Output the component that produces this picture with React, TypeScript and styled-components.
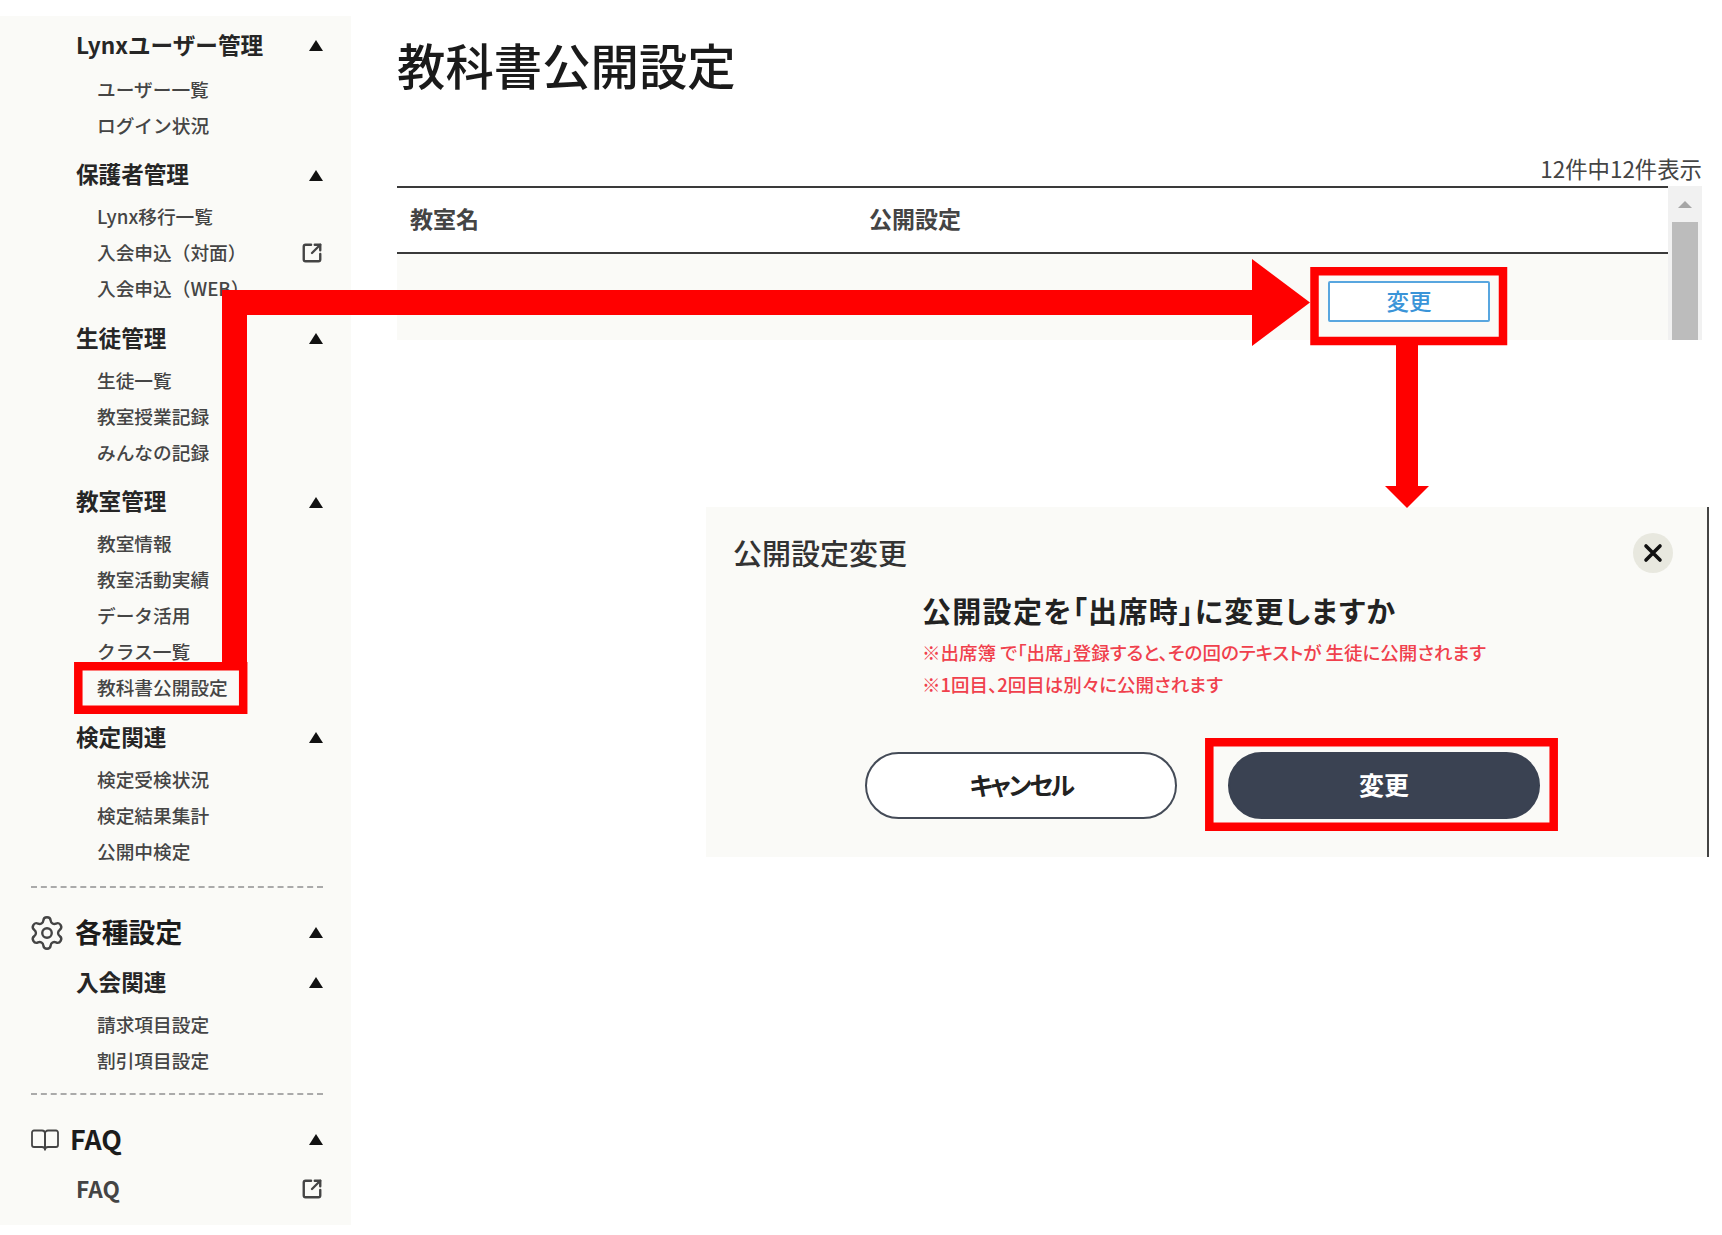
import React from "react";
import styled, { createGlobalStyle } from "styled-components";
import { Settings, SquareArrowOutUpRight } from "lucide-react";

const Global = createGlobalStyle`
  html, body { margin: 0; padding: 0; background: #fff; }
  body { font-family: "Noto Sans CJK JP", "Noto Sans", sans-serif; color: #333; }
`;

const Page = styled.div`
  position: relative;
  display: flex;
  align-items: flex-start;
  width: 1722px;
  height: 1235px;
  overflow: hidden;
`;

const Sidebar = styled.nav`
  box-sizing: border-box;
  flex: 0 0 351px;
  height: 1209px;
  margin-top: 16px;
  padding: 12px 28px 0 31px;
  background: #fafaf7;
`;

const Group = styled.section<{ $gap?: number }>`
  margin-bottom: ${(p) => p.$gap ?? 13.5}px;
`;

const GroupHead = styled.div<{ $mb?: number }>`
  box-sizing: border-box;
  display: flex;
  align-items: center;
  height: 36px;
  margin-bottom: ${(p) => p.$mb ?? 6}px;
  padding: 0 0 4px 45px;
  font-size: 22.6px;
  font-weight: 700;
  color: #262626;
`;

const SectionHead = styled.div<{ $mb?: number }>`
  box-sizing: border-box;
  display: flex;
  align-items: center;
  height: 36px;
  margin-bottom: ${(p) => p.$mb ?? 14}px;
  padding-bottom: 4px;
  font-size: 26.8px;
  font-weight: 700;
  color: #1c1c1c;
`;

const SectionIcon = styled.span<{ $w: number; $shift?: number }>`
  display: flex;
  flex: 0 0 ${(p) => p.$w}px;
  margin-top: 3px;
  color: #444;
  & > svg {
    margin-left: ${(p) => p.$shift ?? 0}px;
  }
`;

const Caret = styled.span`
  width: 0;
  height: 0;
  margin: 3px 0 0 auto;
  border-left: 7px solid transparent;
  border-right: 7px solid transparent;
  border-bottom: 11px solid #111;
`;

const Item = styled.div`
  box-sizing: border-box;
  display: flex;
  align-items: center;
  height: 36px;
  padding: 0 0 4px 66px;
  font-size: 18.7px;
  font-weight: 500;
  color: #454545;
  white-space: nowrap;
`;

const LinkRow = styled(GroupHead)`
  margin: 0;
  color: #444;
  font-weight: 600;
`;

const LinkIcon = styled.span`
  display: flex;
  margin: 2px 0 0 auto;
  color: #444;
`;

const Dashed = styled.hr<{ $mt: number; $mb: number }>`
  margin: ${(p) => p.$mt}px 0 ${(p) => p.$mb}px;
  border: 0;
  border-top: 2px dashed #aaa;
`;

const Main = styled.main`
  box-sizing: border-box;
  flex: 1;
  min-width: 0;
  padding: 34px 13px 0 46px;
`;

const Title = styled.h1`
  margin: 0;
  font-size: 48.4px;
  line-height: 60px;
  font-weight: 500;
  color: #1a1a1a;
`;

const Count = styled.div`
  margin: 60px 7px 0 0;
  height: 28px;
  line-height: 28px;
  text-align: right;
  font-size: 22.4px;
  color: #444;
`;

const TableWrap = styled.div`
  display: flex;
  margin: 4px 7px 0 0;
  height: 154px;
`;

const Table = styled.div`
  flex: 1;
  min-width: 0;
`;

const TableHead = styled.div`
  display: flex;
  align-items: center;
  box-sizing: border-box;
  height: 68px;
  padding: 0 0 4px 13px;
  border-top: 2px solid #3a3a3a;
  border-bottom: 2px solid #3a3a3a;
  font-size: 23px;
  font-weight: 700;
  color: #444;
`;

const NameCol = styled.span`
  flex: 0 0 459px;
`;

const TableRow = styled.div`
  display: flex;
  justify-content: flex-end;
  box-sizing: border-box;
  height: 86px;
  padding: 27px 178px 0 0;
  background: #fafaf7;
`;

const OutlineButton = styled.button`
  box-sizing: border-box;
  width: 162px;
  height: 41px;
  padding: 0 0 4px;
  border: 2.5px solid #58a6df;
  border-radius: 2px;
  background: #fff;
  font-family: inherit;
  font-size: 22.5px;
  font-weight: 500;
  color: #3a94d8;
`;

const Scrollbar = styled.div`
  display: flex;
  flex-direction: column;
  flex: 0 0 34px;
  background: #f1f1f1;
`;

const ScrollUp = styled.div`
  display: flex;
  align-items: center;
  justify-content: center;
  height: 36px;
  &::before {
    content: "";
    border-left: 7px solid transparent;
    border-right: 7px solid transparent;
    border-bottom: 7px solid #a6a6a6;
  }
`;

const ScrollThumb = styled.div`
  flex: 1;
  margin: 0 4px;
  background: #bcbcbc;
`;

const Dialog = styled.section`
  box-sizing: border-box;
  width: 1003px;
  height: 350px;
  margin: 167px 0 0 309px;
  padding: 26px 34px 0 27px;
  border-right: 2px solid #444;
  background: #fafaf7;
`;

const DialogHead = styled.header`
  display: flex;
  align-items: center;
  justify-content: space-between;
  height: 40px;
`;

const DialogTitle = styled.h2`
  margin: 0 0 2px;
  font-size: 29px;
  font-weight: 500;
  color: #333;
`;

const CloseButton = styled.button`
  display: flex;
  align-items: center;
  justify-content: center;
  width: 40px;
  height: 40px;
  padding: 0;
  border: 0;
  border-radius: 50%;
  background: #e8e8df;
  color: #111;
`;

const DialogBody = styled.div`
  margin: 17px 0 0 189px;
`;

const Question = styled.p`
  margin: 0 0 6px;
  height: 40px;
  line-height: 40px;
  font-size: 29px;
  font-weight: 700;
  font-feature-settings: "palt";
  letter-spacing: 1.3px;
  color: #222;
  white-space: nowrap;
`;

const Note = styled.p`
  margin: 0;
  height: 32px;
  line-height: 32px;
  font-size: 18.5px;
  font-weight: 500;
  font-feature-settings: "palt";
  color: #f0404c;
  white-space: nowrap;
`;

const Actions = styled.div`
  display: flex;
  gap: 51px;
  margin: 52px 0 0 132px;
`;

const PillButton = styled.button<{ $solid?: boolean }>`
  box-sizing: border-box;
  width: 312px;
  height: 67px;
  padding: 0 0 4px;
  border: 2px solid ${(p) => (p.$solid ? "#3a4252" : "#444b57")};
  border-radius: 34px;
  background: ${(p) => (p.$solid ? "#3a4252" : "#fff")};
  color: ${(p) => (p.$solid ? "#fff" : "#222")};
  font-family: inherit;
  font-size: 25px;
  font-weight: 700;
  font-feature-settings: "palt";
  letter-spacing: ${(p) => (p.$solid ? 0 : -2.4)}px;
`;

const Annotation = styled.svg`
  position: absolute;
  inset: 0;
  pointer-events: none;
`;

const BookIcon = () => (
  <svg width="28" height="22" viewBox="0 0 28 22" fill="none" stroke="currentColor" strokeWidth="1.8" strokeLinejoin="round">
    <path d="M3 1.500h8c1.700 0 3 1.300 3 3v16c0-1.300-1.300-2.500-3-2.500H3c-1.100 0-2-.9-2-2v-12.500c0-1.100.9-2 2-2Z" />
    <path d="M25 1.500h-8c-1.700 0-3 1.300-3 3v16c0-1.300 1.300-2.500 3-2.500h8c1.100 0 2-.9 2-2v-12.500c0-1.100-.9-2-2-2Z" />
  </svg>
);

const groups = [
  { title: "Lynxユーザー管理", items: ["ユーザー一覧", "ログイン状況"], mb: 8 },
  { title: "保護者管理", items: ["Lynx移行一覧", "入会申込（対面）", "入会申込（WEB）"], external: 1 },
  { title: "生徒管理", items: ["生徒一覧", "教室授業記録", "みんなの記録"] },
  { title: "教室管理", items: ["教室情報", "教室活動実績", "データ活用", "クラス一覧", "教科書公開設定"] },
  { title: "検定関連", items: ["検定受検状況", "検定結果集計", "公開中検定"], last: true },
];

export default function App() {
  return (
    <>
      <Global />
      <Page>
        <Sidebar>
          {groups.map((g) => (
            <Group key={g.title} $gap={g.last ? 0 : undefined}>
              <GroupHead $mb={g.mb}>
                {g.title}
                <Caret />
              </GroupHead>
              {g.items.map((label, i) => (
                <Item key={label}>
                  {label}
                  {g.external === i && (
                    <LinkIcon>
                      <SquareArrowOutUpRight size={22} strokeWidth={2.6} />
                    </LinkIcon>
                  )}
                </Item>
              ))}
            </Group>
          ))}
          <Dashed $mt={16} $mb={27} />
          <SectionHead>
            <SectionIcon $w={44} $shift={-3}>
              <Settings size={38} strokeWidth={1.5} />
            </SectionIcon>
            各種設定
            <Caret />
          </SectionHead>
          <Group $gap={0}>
            <GroupHead>
              入会関連
              <Caret />
            </GroupHead>
            <Item>請求項目設定</Item>
            <Item>割引項目設定</Item>
          </Group>
          <Dashed $mt={14} $mb={27} />
          <SectionHead>
            <SectionIcon $w={39}>
              <BookIcon />
            </SectionIcon>
            FAQ
            <Caret />
          </SectionHead>
          <LinkRow>
            FAQ
            <LinkIcon>
              <SquareArrowOutUpRight size={22} strokeWidth={2.6} />
            </LinkIcon>
          </LinkRow>
        </Sidebar>
        <Main>
          <Title>教科書公開設定</Title>
          <Count>12件中12件表示</Count>
          <TableWrap>
            <Table>
              <TableHead>
                <NameCol>教室名</NameCol>
                <span>公開設定</span>
              </TableHead>
              <TableRow>
                <OutlineButton>変更</OutlineButton>
              </TableRow>
            </Table>
            <Scrollbar>
              <ScrollUp />
              <ScrollThumb />
            </Scrollbar>
          </TableWrap>
          <Dialog>
            <DialogHead>
              <DialogTitle>公開設定変更</DialogTitle>
              <CloseButton aria-label="閉じる">
                <svg width="20" height="20" viewBox="0 0 20 20" stroke="currentColor" strokeWidth="3.6" strokeLinecap="round">
                  <path d="M3 3l14 14M17 3 3 17" />
                </svg>
              </CloseButton>
            </DialogHead>
            <DialogBody>
              <Question>公開設定を「出席時」に変更しますか</Question>
              <Note>※出席簿 で「出席」登録すると、その回のテキストが 生徒に公開されます</Note>
              <Note>※1回目、2回目は別々に公開されます</Note>
            </DialogBody>
            <Actions>
              <PillButton>キャンセル</PillButton>
              <PillButton $solid>変更</PillButton>
            </Actions>
          </Dialog>
        </Main>
        <Annotation width="1722" height="1235" viewBox="0 0 1722 1235">
          <path
            fill="#ff0000"
            d="M222 662V290H1252V259L1310 302.500 1252 346V315H247V662Z"
          />
          <path
            fill="none"
            stroke="#ff0000"
            strokeWidth="8.500"
            d="M78.300 666.300H243.200V709.700H78.300ZM1314.500 271.300H1503V341H1314.500ZM1209.300 742.300H1553.700V826.700H1209.300Z"
          />
          <path fill="#ff0000" d="M1396 345H1418V486H1429L1407 508 1385 486H1396Z" />
        </Annotation>
      </Page>
    </>
  );
}
